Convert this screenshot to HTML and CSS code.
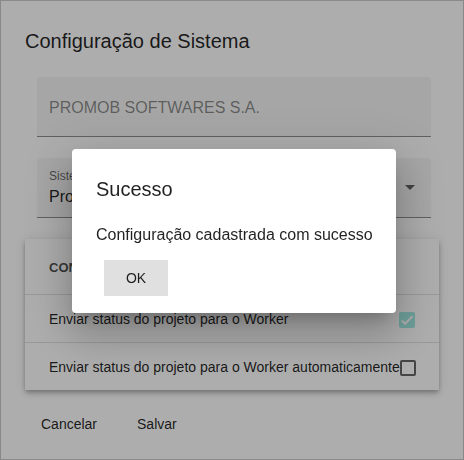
FILE: index.html
```html
<!DOCTYPE html>
<html lang="pt">
<head>
<meta charset="utf-8">
<title>Configuração de Sistema</title>
<link rel="stylesheet" href="styles.css">
</head>
<body>
<div class="page">
  <h2 class="title">Configuração de Sistema</h2>
  <div class="form">
    <div class="field">
      <div class="field-box plain">
        <span class="placeholder">PROMOB SOFTWARES S.A.</span>
      </div>
    </div>
    <div class="field">
      <div class="field-box select">
        <div class="infix">
          <span class="label">Sistema</span>
          <span class="value">Promob</span>
        </div>
        <span class="arrow"></span>
      </div>
    </div>
  </div>
  <div class="table-card">
    <div class="row header-row">
      <span class="cell header-cell">CONFIGURAÇÕES</span>
    </div>
    <div class="row">
      <span class="cell">Enviar status do projeto para o Worker</span>
      <span class="checkbox checked">
        <svg viewBox="0 0 24 24" width="16" height="16"><path d="M4.1 12.7 9 17.6 20.3 6.3" fill="none" stroke="#ffffff" stroke-width="3.1"/></svg>
      </span>
    </div>
    <div class="row">
      <span class="cell">Enviar status do projeto para o Worker automaticamente</span>
      <span class="checkbox"></span>
    </div>
  </div>
  <div class="actions">
    <button class="text-btn">Cancelar</button>
    <button class="text-btn">Salvar</button>
  </div>
</div>
<div class="backdrop"></div>
<div class="alert">
  <h2 class="alert-title">Sucesso</h2>
  <div class="alert-content">Configuração cadastrada com sucesso</div>
  <div class="alert-actions">
    <button class="ok-btn">OK</button>
  </div>
</div>
</body>
</html>
```

FILE: styles.css
```css
* { box-sizing: border-box; }

html, body {
  margin: 0;
  padding: 0;
  background: #ffffff;
  font-family: "Liberation Sans", Arial, sans-serif;
  color: rgba(0, 0, 0, 0.87);
}

.page {
  width: 464px;
  height: 460px;
  border: 1px solid #cbcbcb;
  padding: 24px;
  background: #ffffff;
  display: flex;
  flex-direction: column;
}

.title {
  margin: 0 0 20px;
  font-size: 20px;
  line-height: 32px;
  font-weight: 400;
  color: rgba(0, 0, 0, 0.87);
}

.form {
  padding: 0 8px 0 12px;
  display: flex;
  flex-direction: column;
}

.field {
  margin-bottom: 21px;
}

.field-box {
  height: 60px;
  background: rgba(0, 0, 0, 0.04);
  border-radius: 4px 4px 0 0;
  border-bottom: 1px solid rgba(0, 0, 0, 0.42);
  padding: 0 12px;
  display: flex;
}

.field-box.plain {
  align-items: center;
  padding-top: 2px;
}

.placeholder {
  font-size: 16px;
  line-height: 19px;
  color: rgba(0, 0, 0, 0.45);
}

.field-box.select {
  align-items: flex-start;
}

.infix {
  flex: 1;
  display: flex;
  flex-direction: column;
  padding-top: 11px;
}

.label {
  font-size: 12px;
  line-height: 14px;
  color: rgba(0, 0, 0, 0.6);
  margin-bottom: 4px;
}

.value {
  font-size: 16px;
  line-height: 20px;
  color: rgba(0, 0, 0, 0.87);
}

.arrow {
  align-self: center;
  width: 0;
  height: 0;
  border-left: 5px solid transparent;
  border-right: 5px solid transparent;
  border-top: 5px solid rgba(0, 0, 0, 0.6);
  margin-right: 4px;
  margin-top: -1px;
}

.table-card {
  background: #ffffff;
  box-shadow: 0 2px 4px -1px rgba(0, 0, 0, 0.2), 0 4px 5px 0 rgba(0, 0, 0, 0.14), 0 1px 10px 0 rgba(0, 0, 0, 0.12);
  display: flex;
  flex-direction: column;
}

.row {
  height: 48px;
  border-bottom: 1px solid rgba(0, 0, 0, 0.12);
  padding: 0 24px;
  display: flex;
  align-items: center;
}

.header-row {
  height: 56px;
  padding-top: 2px;
}

.row:last-child {
  border-bottom: none;
  height: 47px;
}

.cell {
  flex: 1;
  font-size: 14px;
  line-height: 16px;
  white-space: nowrap;
  color: rgba(0, 0, 0, 0.87);
}

.header-cell {
  font-size: 13px;
  line-height: 15px;
  font-weight: 700;
  color: rgba(0, 0, 0, 0.7);
}

.checkbox {
  flex: none;
  width: 16px;
  height: 16px;
  border: 2px solid rgba(0, 0, 0, 0.6);
  border-radius: 2px;
  margin-top: 3px;
  display: flex;
  align-items: center;
  justify-content: center;
}

.checkbox.checked {
  border: none;
  background: #a2ebe4;
}

.actions {
  display: flex;
  padding-top: 16px;
}

.text-btn {
  height: 36px;
  min-width: 64px;
  padding: 0 16px;
  border: none;
  background: transparent;
  font-family: "Liberation Sans", Arial, sans-serif;
  font-size: 14px;
  line-height: 36px;
  color: rgba(0, 0, 0, 0.87);
}

.text-btn + .text-btn {
  margin-left: 8px;
}

.backdrop {
  position: fixed;
  inset: 0;
  background: rgba(0, 0, 0, 0.32);
}

.alert {
  position: absolute;
  left: 72px;
  top: 149px;
  width: 324px;
  padding: 24px 24px 1px;
  background: #ffffff;
  border-radius: 4px;
  box-shadow: 0 11px 15px -7px rgba(0, 0, 0, 0.2), 0 24px 38px 3px rgba(0, 0, 0, 0.14), 0 9px 46px 8px rgba(0, 0, 0, 0.12);
}

.alert-title {
  margin: 0 0 20px;
  font-size: 20px;
  line-height: 32px;
  font-weight: 400;
  color: rgba(0, 0, 0, 0.87);
}

.alert-content {
  font-size: 16px;
  line-height: 19px;
  white-space: nowrap;
  color: rgba(0, 0, 0, 0.87);
}

.alert-actions {
  display: flex;
  align-items: center;
  min-height: 52px;
  padding: 8px 0;
  box-sizing: content-box;
}

.ok-btn {
  margin-left: 8px;
  width: 64px;
  height: 36px;
  border: none;
  border-radius: 0;
  background: #e0e0e0;
  font-family: "Liberation Sans", Arial, sans-serif;
  font-size: 14px;
  line-height: 36px;
  color: rgba(0, 0, 0, 0.87);
  padding: 0;
}
```
